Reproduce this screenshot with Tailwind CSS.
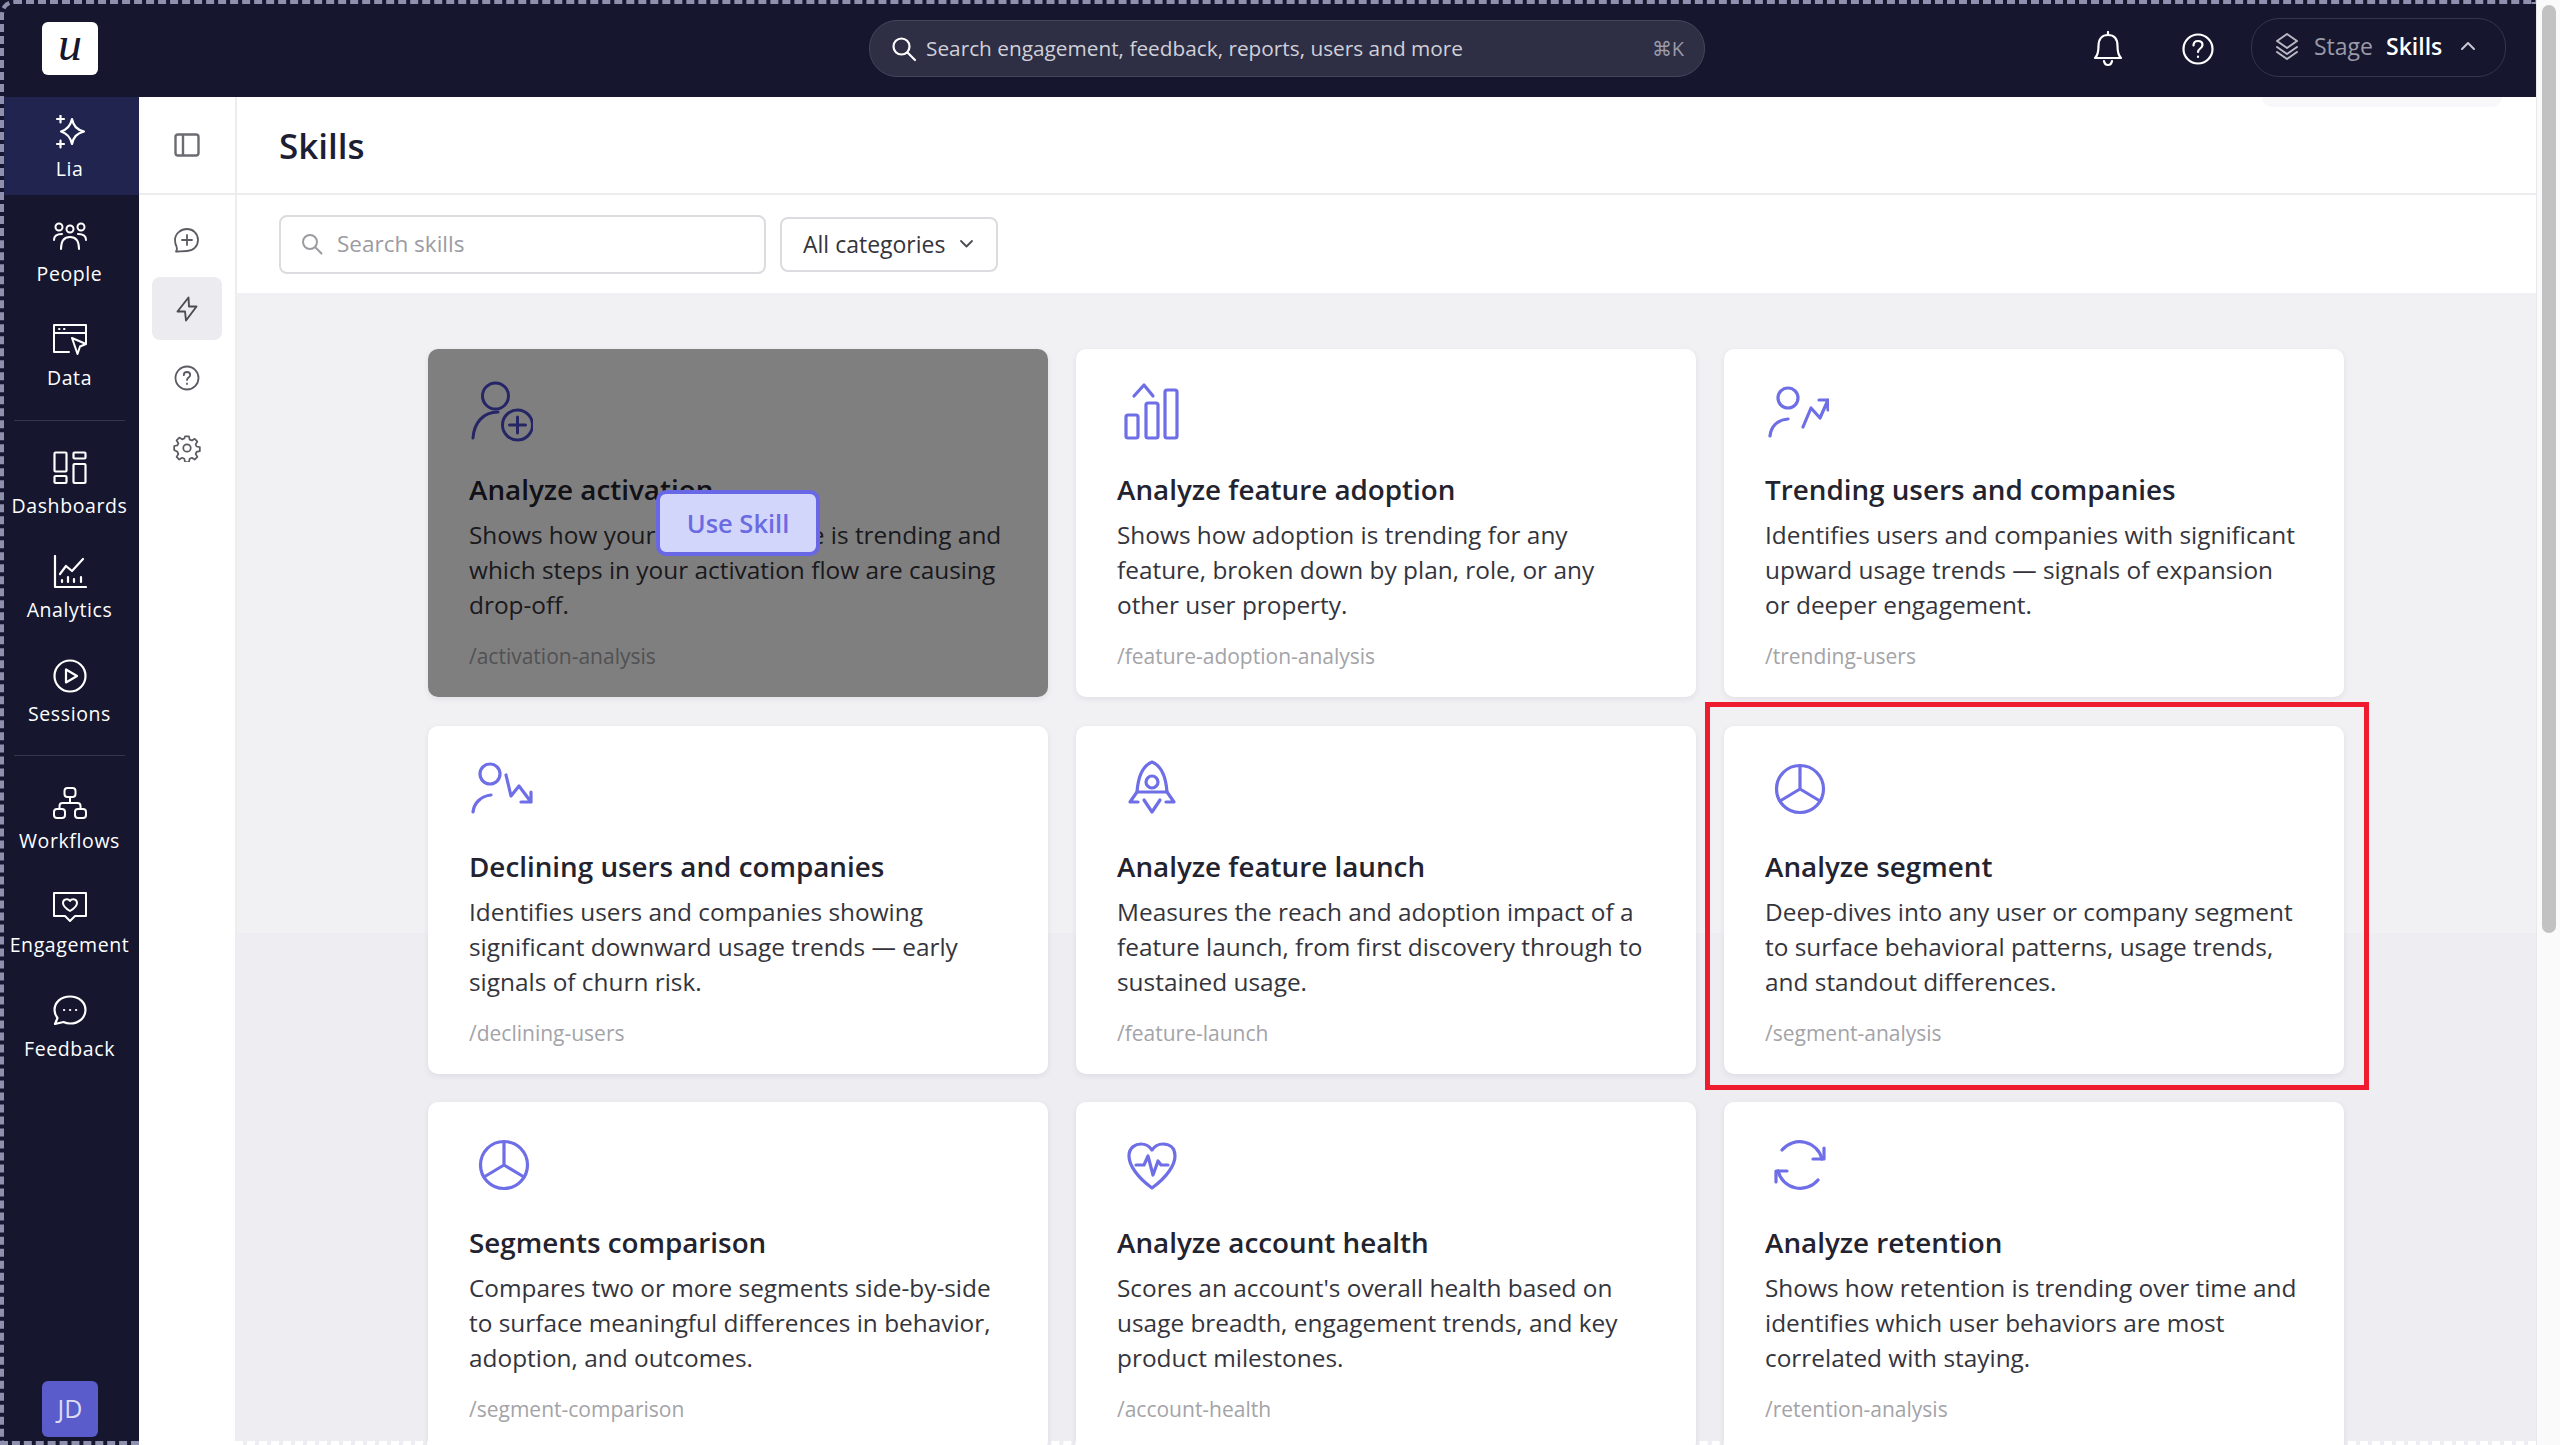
<!DOCTYPE html>
<html lang="en">
<head>
<meta charset="utf-8">
<title>Skills</title>
<script src="https://cdn.jsdelivr.net/npm/@tailwindcss/browser@4"></script>
</head>
<body class="relative w-[2560px] h-[1445px] overflow-hidden bg-white font-['Open_Sans',sans-serif] flex">
<div class="w-[2536px] h-full flex flex-col shrink-0">
  <!-- top bar -->
  <header class="h-[97px] shrink-0 bg-[#16162e] flex items-center">
    <div class="ml-[42px] w-[56px] h-[53px] rounded-[6px] bg-white flex items-center justify-center font-['Liberation_Serif',serif] italic text-[48px] leading-none text-[#16162e] pb-[10px]">u</div>
    <div class="ml-[771px] w-[836px] h-[57px] rounded-[28px] bg-[#2e2e45] border border-[#45455c] flex items-center pl-[21px] pr-[20px] text-[20.800px] text-[#d0d0d8]">
      <svg class="w-[26px] h-[26px] mr-[9px]" viewBox="0 0 26 26" fill="none" stroke="#fff" stroke-width="2.2" stroke-linecap="round"><circle cx="10.5" cy="10.5" r="8"/><path d="M16.5 16.5L24 24"/></svg>
      <span>Search engagement, feedback, reports, users and more</span>
      <span class="ml-auto text-[20px] text-[#9a9aa8]">⌘K</span>
    </div>
    <svg class="ml-[386px] w-[34px] h-[36px]" viewBox="0 0 34 36" fill="none" stroke="#fff" stroke-width="2.2" stroke-linecap="round" stroke-linejoin="round"><path d="M4 27c3-3 3.500-6 3.500-12C7.500 8 11 4 17 4s9.500 4 9.500 11c0 6 .5 9 3.500 12z"/><path d="M13 30c.5 3 2 4 4 4s3.500-1 4-4M17 1v3"/></svg>
    <svg class="ml-[57px] w-[32px] h-[32px]" viewBox="0 0 32 32" fill="none" stroke="#fff" stroke-width="2.2" stroke-linecap="round"><circle cx="16" cy="16" r="14.500"/><path d="M11.500 12.500c0-3 2-4.500 4.500-4.500s4.500 1.500 4.500 4c0 3.500-4.500 3.500-4.500 7"/><path d="M16 23.500v.5"/></svg>
    <div class="relative ml-[37px] w-[255px] h-[59px] -mt-[2px] rounded-[28px] bg-[#16162e] border border-[#35354c] flex items-center pl-[22px] pb-[3px] text-[23px]">
      <svg class="w-[26px] h-[28px] mr-[14px]" viewBox="0 0 26 28" fill="none" stroke="#b9b9c6" stroke-width="2" stroke-linejoin="round" stroke-linecap="round"><path d="M13 2l10 7-10 7L3 9z"/><path d="M3 15l10 7 10-7M3 20l10 7 10-7"/></svg>
      <span class="text-[#9a9aa8]">Stage</span>
      <span class="ml-[13px] font-semibold text-white">Skills</span>
      <svg class="ml-[18px] w-[16px] h-[10px]" viewBox="0 0 16 10" fill="none" stroke="#c8c8d2" stroke-width="2" stroke-linecap="round" stroke-linejoin="round"><path d="M2 8l6-6 6 6"/></svg>
    </div>
  </header>

  <div class="flex-1 flex min-h-0">
    <!-- main nav -->
    <nav class="w-[139px] shrink-0 h-full bg-[#16162e] flex flex-col text-white text-[19.500px] tracking-[0.6px] font-medium relative">
      <a class="h-[98px] ml-[4px] bg-[#20244e] flex flex-col items-center justify-start pt-[18px]">
        <svg class="w-[34px] h-[34px] -ml-[4px]" viewBox="0 0 34 34" fill="none" stroke="#fff" stroke-width="2.200" stroke-linejoin="round" stroke-linecap="round"><path d="M19 4c1.500 7 4.500 10.500 12 12.500-7.500 2-10.500 5.500-12 12.500-1.500-7-4.500-10.500-11-12.500 6.500-2 9.500-5.500 11-12.500z"/><path d="M4 4h7M7.500 .5v7M4 29h7M7.500 25.500v7"/></svg>
        <span class="leading-[27px] mt-[6px] -ml-[4px]">Lia</span>
      </a>
      <a class="mt-[6px] h-[104px] flex flex-col items-center justify-center">
        <svg class="w-[34px] h-[34px]" viewBox="0 -3 34 34" fill="none" stroke="#fff" stroke-width="2" stroke-linecap="round"><circle cx="6" cy="5" r="3.500"/><circle cx="17" cy="7" r="3.500"/><circle cx="28" cy="5" r="3.500"/><path d="M1 18c0-4 3-6 8-6M33 18c0-4-3-6-8-6M8 27c0-8 3-12 9-12s9 4 9 12"/></svg>
        <span class="leading-[27px] mt-[7px]">People</span>
      </a>
      <a class="h-[104px] flex flex-col items-center justify-center">
        <svg class="w-[34px] h-[34px]" viewBox="0 0 34 34" fill="none" stroke="#fff" stroke-width="2" stroke-linejoin="round" stroke-linecap="round"><path d="M16 29H1V2h32v18"/><path d="M1 10h32"/><path d="M6 6h.5M11 6h.5"/><path d="M19 15l14 6-6 2.500-2.500 7.500z" fill="#16162e"/></svg>
        <span class="leading-[27px] mt-[7px]">Data</span>
      </a>
      <div class="mt-[11px] mx-[14px] h-px bg-[#35354c]"></div>
      <a class="mt-[12px] h-[104px] flex flex-col items-center justify-center">
        <svg class="w-[34px] h-[34px]" viewBox="0 0 34 34" fill="none" stroke="#fff" stroke-width="2.200" stroke-linejoin="round"><rect x="1.500" y="1.500" width="12" height="19" rx="1"/><rect x="20.500" y="1.500" width="12" height="6" rx="1"/><rect x="1.500" y="25" width="12" height="7" rx="1"/><rect x="20.500" y="13" width="12" height="19" rx="1"/></svg>
        <span class="leading-[27px] mt-[7px]">Dashboards</span>
      </a>
      <a class="h-[104px] flex flex-col items-center justify-center">
        <svg class="w-[34px] h-[34px]" viewBox="0 0 34 34" fill="none" stroke="#fff" stroke-width="2.200" stroke-linejoin="round" stroke-linecap="round"><path d="M2 1v31h31"/><path d="M7 19l6-8 6 5 11-12"/><path d="M9 27v-2M15 27v-5M21 27v-3M28 27v-5"/></svg>
        <span class="leading-[27px] mt-[7px]">Analytics</span>
      </a>
      <a class="h-[104px] flex flex-col items-center justify-center">
        <svg class="w-[34px] h-[34px]" viewBox="0 0 34 34" fill="none" stroke="#fff" stroke-width="2.200" stroke-linejoin="round"><circle cx="17" cy="17" r="15.500"/><path d="M13 10.500v13L24 17z"/></svg>
        <span class="leading-[27px] mt-[7px]">Sessions</span>
      </a>
      <div class="mt-[10px] mx-[14px] h-px bg-[#35354c]"></div>
      <a class="mt-[12px] h-[104px] flex flex-col items-center justify-center">
        <svg class="w-[34px] h-[34px]" viewBox="0 0 34 34" fill="none" stroke="#fff" stroke-width="2" stroke-linejoin="round"><rect x="11.500" y="2" width="11" height="9" rx="3"/><rect x="1" y="23" width="11" height="9" rx="3"/><rect x="22" y="23" width="11" height="9" rx="3"/><path d="M17 11v6M6.500 23v-3c0-2 1-3 3-3h15c2 0 3 1 3 3v3"/></svg>
        <span class="leading-[27px] mt-[7px]">Workflows</span>
      </a>
      <a class="h-[104px] flex flex-col items-center justify-center">
        <svg class="w-[34px] h-[34px]" viewBox="0 0 34 34" fill="none" stroke="#fff" stroke-width="2" stroke-linejoin="round"><path d="M1 3h32v23H22l-5 5-5-5H1z"/><path d="M17 21c-5-3-7-5-7-8 0-4 5-5 7-2 2-3 7-2 7 2 0 3-2 5-7 8z"/></svg>
        <span class="leading-[27px] mt-[7px]">Engagement</span>
      </a>
      <a class="h-[104px] flex flex-col items-center justify-center">
        <svg class="w-[34px] h-[34px]" viewBox="0 0 34 34" fill="none" stroke="#fff" stroke-width="2.200" stroke-linejoin="round" stroke-linecap="round"><path d="M17 2.500c9 0 15.500 6 15.500 13.500S26 29.500 17 29.500c-2.500 0-4.500-.5-6.500-1.500L2 30l2.500-6C3 22 1.500 19 1.500 16 1.500 8.500 8 2.500 17 2.500z"/><path d="M11 16h.2M17 16h.2M23 16h.2"/></svg>
        <span class="leading-[27px] mt-[7px]">Feedback</span>
      </a>
      <div class="absolute left-[42px] top-[1284px] w-[56px] h-[56px] rounded-[6px] bg-[#5a5ccb] flex items-center justify-center text-[#dcdcf5] text-[25px] tracking-normal font-normal">JD</div>
    </nav>

    <!-- secondary rail -->
    <aside class="w-[98px] shrink-0 h-full bg-white border-r-2 border-[#ededf0] flex flex-col items-center">
      <div class="h-[98px] w-full shrink-0 border-b-2 border-[#ededf0] flex items-center justify-center">
        <svg class="w-[26px] h-[24px]" viewBox="0 0 26 24" fill="none" stroke="#6b6b72" stroke-width="2.400" stroke-linejoin="round"><rect x="1.500" y="1.500" width="23" height="21" rx="2.500"/><path d="M9 2v20"/></svg>
      </div>
      <div class="mt-[27px] w-full flex flex-col items-center">
        <div class="h-[36px] flex items-center justify-center">
          <svg class="w-[26px] h-[26px]" viewBox="0 0 26 26" fill="none" stroke="#5b5b63" stroke-width="1.800" stroke-linejoin="round" stroke-linecap="round"><path d="M13 2c6 0 11 4.500 11 11s-5 11-11 11c-3 0-9 .5-11 .5 1-1.500 1.500-3 .5-5-1-2-1.500-4-1.500-6.500C1 6.500 7 2 13 2z"/><path d="M13 8v10M8 13h10"/></svg>
        </div>
        <div class="mt-[19px] w-[70px] h-[63px] rounded-[8px] bg-[#ececf0] flex items-center justify-center">
          <svg class="w-[22px] h-[26px]" viewBox="0 0 22 26" fill="none" stroke="#4b4b52" stroke-width="1.900" stroke-linejoin="round"><path d="M12.500 1.500L1.500 15.500h7.500l1 9L20.500 10.500H13z"/></svg>
        </div>
        <div class="mt-[20px] h-[36px] flex items-center justify-center">
          <svg class="w-[26px] h-[26px]" viewBox="0 0 26 26" fill="none" stroke="#5b5b63" stroke-width="1.800" stroke-linecap="round"><circle cx="13" cy="13" r="11.500"/><path d="M9.800 10.200c0-2 1.400-3.200 3.200-3.200s3.200 1.200 3.200 3c0 2.500-3.200 2.600-3.200 5"/><path d="M13 18.500v.5"/></svg>
        </div>
        <div class="mt-[34px] h-[36px] flex items-center justify-center">
          <svg class="w-[28px] h-[28px]" viewBox="0 0 24 24" fill="none" stroke="#5b5b63" stroke-width="1.500" stroke-linejoin="round"><circle cx="12" cy="12" r="3.200"/><path d="M10.300 2h3.400l.6 2.800 1.900.8 2.400-1.500 2.300 2.400-1.500 2.400.8 1.800 2.800.6v3.400l-2.800.6-.8 1.900 1.500 2.400-2.300 2.300-2.400-1.500-1.900.8-.6 2.800h-3.400l-.6-2.800-1.900-.8-2.400 1.500-2.300-2.300 1.500-2.400-.8-1.900L1 13.700v-3.400l2.800-.6.8-1.800-1.500-2.400 2.300-2.400 2.400 1.500 1.900-.8z"/></svg>
        </div>
      </div>
    </aside>

    <!-- content -->
    <main class="flex-1 min-w-0 flex flex-col">
      <div class="h-[98px] shrink-0 border-b-2 border-[#ededf0] flex items-center pl-[42px] bg-white">
        <h1 class="text-[35px] font-semibold text-[#1d1d33] leading-none">Skills</h1>
      </div>
      <div class="h-[98px] shrink-0 bg-white flex items-center pl-[42px]">
        <div class="w-[487px] h-[59px] rounded-[8px] border-2 border-[#dcdce0] flex items-center pl-[20px] text-[22.500px] text-[#9b9ba2]">
          <svg class="w-[22px] h-[22px] mr-[14px]" viewBox="0 0 22 22" fill="none" stroke="#9b9ba2" stroke-width="2" stroke-linecap="round"><circle cx="9" cy="9" r="7"/><path d="M14 14l6.500 6.500"/></svg>
          Search skills
        </div>
        <div class="ml-[14px] w-[218px] h-[55px] rounded-[8px] border-2 border-[#dcdce0] flex items-center pl-[21px] text-[23px] text-[#34343c]">
          All categories
          <svg class="ml-[14px] w-[15px] h-[10px]" viewBox="0 0 15 10" fill="none" stroke="#4b4b52" stroke-width="1.800" stroke-linecap="round" stroke-linejoin="round"><path d="M2 2l5.500 5.500L13 2"/></svg>
        </div>
      </div>
      <div class="flex-1 min-h-0 overflow-hidden bg-[linear-gradient(#f1f1f4_640px,#ededf2_640px)] pt-[56px] pl-[191px]">
        <div class="grid grid-cols-[620px_620px_620px] auto-rows-[348px] gap-x-[28px] gap-y-[28.500px]">

          <article class="relative h-[348px] rounded-[10px] bg-white shadow-[0_2px_6px_rgba(30,30,60,0.08)] pl-[41px] pt-[30px]">
            <svg class="w-[64px] h-[64px]" viewBox="0 0 64 64" fill="none" stroke="#4c4ccf" stroke-width="3" stroke-linecap="round"><circle cx="26.500" cy="17" r="13"/><path d="M29 33C14 33 5 44 4 59"/><circle cx="48.500" cy="46" r="15"/><path d="M48.500 38v16M40.500 46h16"/></svg>
            <h2 class="mt-[29px] text-[27.800px] leading-[34px] font-semibold text-[#23232f]">Analyze activation</h2>
            <p class="mt-[11px] w-[536px] text-[24.400px] leading-[35px] text-[#34343c]">Shows how your activation rate is trending and which steps in your activation flow are causing drop-off.</p>
            <p class="mt-[18px] text-[21px] leading-[32px] text-[#a3a3a8]">/activation-analysis</p>
            <div class="absolute inset-0 rounded-[10px] bg-black/50 flex items-center justify-center">
              <button class="w-[164px] h-[66px] rounded-[10px] bg-[#d3d6fb] border-[4px] border-[#6868e6] text-[#6a6ae2] text-[25.500px] font-semibold">Use Skill</button>
            </div>
          </article>

          <article class="h-[348px] rounded-[10px] bg-white shadow-[0_2px_6px_rgba(30,30,60,0.08)] pl-[41px] pt-[30px]">
            <svg class="w-[64px] h-[64px]" viewBox="0 0 64 64" fill="none" stroke="#6e6ee6" stroke-width="3.200" stroke-linecap="round" stroke-linejoin="round"><rect x="9" y="36" width="12" height="23" rx="2"/><rect x="29" y="24" width="12" height="35" rx="2"/><rect x="48" y="11" width="12" height="48" rx="2"/><path d="M17 17l10-11 9 11"/></svg>
            <h2 class="mt-[29px] text-[27.800px] leading-[34px] font-semibold text-[#23232f]">Analyze feature adoption</h2>
            <p class="mt-[11px] w-[536px] text-[24.400px] leading-[35px] text-[#34343c]">Shows how adoption is trending for any feature, broken down by plan, role, or any other user property.</p>
            <p class="mt-[18px] text-[21px] leading-[32px] text-[#a3a3a8]">/feature-adoption-analysis</p>
          </article>

          <article class="h-[348px] rounded-[10px] bg-white shadow-[0_2px_6px_rgba(30,30,60,0.08)] pl-[41px] pt-[30px]">
            <svg class="w-[64px] h-[64px]" viewBox="0 0 64 64" fill="none" stroke="#6e6ee6" stroke-width="3.200" stroke-linecap="round" stroke-linejoin="round"><circle cx="23" cy="19" r="10"/><path d="M23 40C12 41 6 48 5 57"/><path d="M38 48l8-19 9 10 8-18M54 21h9v10"/></svg>
            <h2 class="mt-[29px] text-[27.800px] leading-[34px] font-semibold text-[#23232f]">Trending users and companies</h2>
            <p class="mt-[11px] w-[536px] text-[24.400px] leading-[35px] text-[#34343c]">Identifies users and companies with significant upward usage trends — signals of expansion or deeper engagement.</p>
            <p class="mt-[18px] text-[21px] leading-[32px] text-[#a3a3a8]">/trending-users</p>
          </article>

          <article class="h-[348px] rounded-[10px] bg-white shadow-[0_2px_6px_rgba(30,30,60,0.08)] pl-[41px] pt-[30px]">
            <svg class="w-[64px] h-[64px]" viewBox="0 0 64 64" fill="none" stroke="#6e6ee6" stroke-width="3.200" stroke-linecap="round" stroke-linejoin="round"><circle cx="21" cy="18" r="10"/><path d="M22 39C12 40 5 47 4 56"/><path d="M37 19l5 21 8-10 12 16M62 36v10H52"/></svg>
            <h2 class="mt-[29px] text-[27.800px] leading-[34px] font-semibold text-[#23232f]">Declining users and companies</h2>
            <p class="mt-[11px] w-[536px] text-[24.400px] leading-[35px] text-[#34343c]">Identifies users and companies showing significant downward usage trends — early signals of churn risk.</p>
            <p class="mt-[18px] text-[21px] leading-[32px] text-[#a3a3a8]">/declining-users</p>
          </article>

          <article class="h-[348px] rounded-[10px] bg-white shadow-[0_2px_6px_rgba(30,30,60,0.08)] pl-[41px] pt-[30px]">
            <svg class="w-[64px] h-[64px]" viewBox="0 0 64 64" fill="none" stroke="#6e6ee6" stroke-width="3.200" stroke-linecap="round" stroke-linejoin="round"><path d="M35 6C25 10 21 22 20 36H50C49 22 45 10 35 6Z"/><circle cx="35" cy="26" r="6"/><path d="M20 36L13 46H21M50 36L57 46H49M27 44L35 56L43 44"/></svg>
            <h2 class="mt-[29px] text-[27.800px] leading-[34px] font-semibold text-[#23232f]">Analyze feature launch</h2>
            <p class="mt-[11px] w-[536px] text-[24.400px] leading-[35px] text-[#34343c]">Measures the reach and adoption impact of a feature launch, from first discovery through to sustained usage.</p>
            <p class="mt-[18px] text-[21px] leading-[32px] text-[#a3a3a8]">/feature-launch</p>
          </article>

          <article class="h-[348px] rounded-[10px] bg-white shadow-[0_2px_6px_rgba(30,30,60,0.08)] pl-[41px] pt-[30px]">
            <svg class="w-[64px] h-[64px]" viewBox="0 0 64 64" fill="none" stroke="#6e6ee6" stroke-width="3.200" stroke-linecap="round" stroke-linejoin="round"><circle cx="35" cy="33" r="23.500"/><path d="M35 10v23L15 45M35 33l20 12"/></svg>
            <h2 class="mt-[29px] text-[27.800px] leading-[34px] font-semibold text-[#23232f]">Analyze segment</h2>
            <p class="mt-[11px] w-[536px] text-[24.400px] leading-[35px] text-[#34343c]">Deep-dives into any user or company segment to surface behavioral patterns, usage trends, and standout differences.</p>
            <p class="mt-[18px] text-[21px] leading-[32px] text-[#a3a3a8]">/segment-analysis</p>
          </article>

          <article class="h-[348px] rounded-[10px] bg-white shadow-[0_2px_6px_rgba(30,30,60,0.08)] pl-[41px] pt-[30px]">
            <svg class="w-[64px] h-[64px]" viewBox="0 0 64 64" fill="none" stroke="#6e6ee6" stroke-width="3.200" stroke-linecap="round" stroke-linejoin="round"><circle cx="35" cy="33" r="23.500"/><path d="M35 10v23L15 45M35 33l20 12"/></svg>
            <h2 class="mt-[29px] text-[27.800px] leading-[34px] font-semibold text-[#23232f]">Segments comparison</h2>
            <p class="mt-[11px] w-[536px] text-[24.400px] leading-[35px] text-[#34343c]">Compares two or more segments side-by-side to surface meaningful differences in behavior, adoption, and outcomes.</p>
            <p class="mt-[18px] text-[21px] leading-[32px] text-[#a3a3a8]">/segment-comparison</p>
          </article>

          <article class="h-[348px] rounded-[10px] bg-white shadow-[0_2px_6px_rgba(30,30,60,0.08)] pl-[41px] pt-[30px]">
            <svg class="w-[64px] h-[64px]" viewBox="0 0 64 64" fill="none" stroke="#6e6ee6" stroke-width="3.200" stroke-linecap="round" stroke-linejoin="round"><path d="M35 56C20 45 12 33 12 24C12 15 19 12 24 12C29 12 33 15 35 18C37 15 41 12 46 12C52 12 58 15 58 24C58 33 50 45 35 56Z"/><path d="M19 33H27L31 24L36 43L41 29L44 33H51"/></svg>
            <h2 class="mt-[29px] text-[27.800px] leading-[34px] font-semibold text-[#23232f]">Analyze account health</h2>
            <p class="mt-[11px] w-[536px] text-[24.400px] leading-[35px] text-[#34343c]">Scores an account's overall health based on usage breadth, engagement trends, and key product milestones.</p>
            <p class="mt-[18px] text-[21px] leading-[32px] text-[#a3a3a8]">/account-health</p>
          </article>

          <article class="h-[348px] rounded-[10px] bg-white shadow-[0_2px_6px_rgba(30,30,60,0.08)] pl-[41px] pt-[30px]">
            <svg class="w-[64px] h-[64px]" viewBox="0 0 64 64" fill="none" stroke="#6e6ee6" stroke-width="3.200" stroke-linecap="round" stroke-linejoin="round"><path d="M57 27A23 23 0 0 0 17 18M13 39A23 23 0 0 0 53 48"/><path d="M59 16V27H48M11 50V39H22"/></svg>
            <h2 class="mt-[29px] text-[27.800px] leading-[34px] font-semibold text-[#23232f]">Analyze retention</h2>
            <p class="mt-[11px] w-[536px] text-[24.400px] leading-[35px] text-[#34343c]">Shows how retention is trending over time and identifies which user behaviors are most correlated with staying.</p>
            <p class="mt-[18px] text-[21px] leading-[32px] text-[#a3a3a8]">/retention-analysis</p>
          </article>
        </div>
      </div>
    </main>
  </div>
</div>

<!-- scrollbar -->
<div class="w-[24px] h-full shrink-0 bg-[#fafafb] border-l border-[#e8e8ec] pt-[5px] pl-[5px]">
  <div class="w-[14px] h-[928px] rounded-full bg-[#c2c2c2]"></div>
</div>

<!-- compression ghost under the stage pill -->
<div class="absolute left-[2262px] top-[97px] w-[240px] h-[10px] rounded-b-[10px] bg-[#f8f8fb] pointer-events-none"></div>
<!-- recording frame -->
<div class="absolute left-0 top-0 w-[2536px] h-[1445px] rounded-tl-[14px] border-[4px] border-r-0 border-b-0 border-dashed border-[#8f8fae] pointer-events-none"></div>
<div class="absolute left-0 bottom-0 w-[139px] border-b-[4px] border-dashed border-[#8f8fae] pointer-events-none"></div>
<div class="absolute left-[139px] bottom-0 w-[2397px] border-b-[4px] border-dashed border-white pointer-events-none"></div>
<!-- annotation -->
<div class="absolute left-[1705px] top-[702px] w-[664px] h-[388px] border-[5px] border-[#ee1c2e] pointer-events-none"></div>
</body>
</html>
